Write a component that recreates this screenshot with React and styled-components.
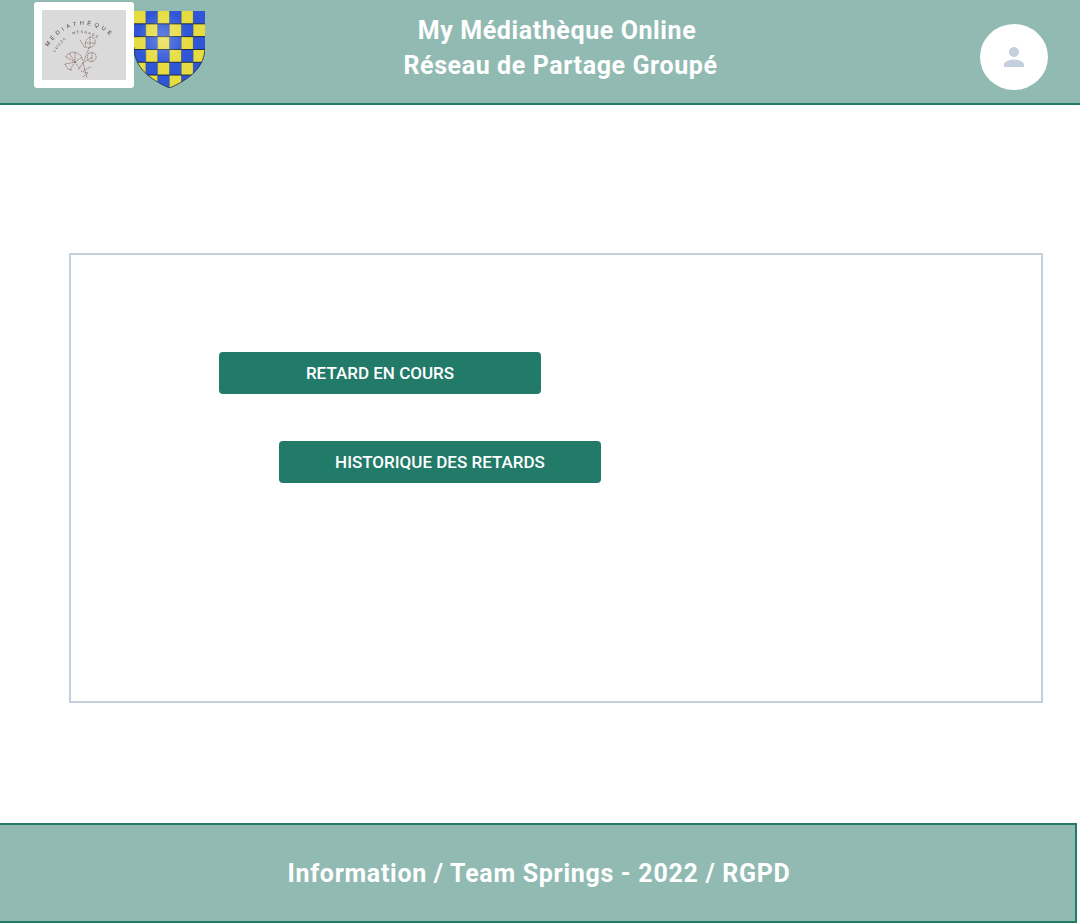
import React from "react";
import styled, { createGlobalStyle } from "styled-components";

const GlobalStyle = createGlobalStyle`
  html, body {
    margin: 0;
    padding: 0;
    background: #ffffff;
    font-family: Roboto, "Liberation Sans", sans-serif;
  }
`;

const Page = styled.div`
  width: 1080px;
  height: 924px;
  overflow: hidden;
`;

const Header = styled.header`
  box-sizing: border-box;
  height: 105px;
  display: flex;
  align-items: flex-start;
  padding: 2px 32px 0 34px;
  background: #91bbb2;
  border-bottom: 2px solid #227a69;
`;

const LogoFrame = styled.div`
  box-sizing: border-box;
  flex: none;
  width: 100px;
  height: 86px;
  padding: 8px;
  background: #ffffff;
  border-radius: 3px;
`;

const LogoImage = styled.svg`
  display: block;
  width: 84px;
  height: 70px;
  background: #dadada;
`;

const LogoInk = styled.g`
  filter: blur(0.4px);
`;

const Shield = styled.svg`
  display: block;
  flex: none;
  width: 71px;
  height: 77px;
  margin-top: 9px;
`;

const Title = styled.h1`
  flex: 1;
  margin: 11px 0 0;
  font-size: 25px;
  font-weight: 700;
  line-height: 35px;
  letter-spacing: 0.6px;
  color: #ffffff;
  text-align: center;
`;

const TitleLine = styled.div`
  padding-right: ${(p) => p.$shift || 0}px;
`;

const Avatar = styled.div`
  flex: none;
  width: 68px;
  height: 66px;
  margin: 22px 0 0 64px;
  display: flex;
  align-items: center;
  justify-content: center;
  border-radius: 50%;
  background: #ffffff;
`;

const Main = styled.main`
  padding: 148px 37px 120px 69px;
`;

const Panel = styled.section`
  box-sizing: border-box;
  height: 450px;
  padding-top: 97px;
  border: 2px solid #c5d0de;
`;

const ActionButton = styled.button`
  display: block;
  width: 322px;
  height: 42px;
  margin: 0 0 47px ${(p) => p.$indent}px;
  padding: 0;
  border: 0;
  border-radius: 4px;
  background: #227a69;
  color: #ffffff;
  font-family: inherit;
  font-size: 17px;
  font-weight: 500;
  text-transform: uppercase;
`;

const Footer = styled.footer`
  box-sizing: border-box;
  width: 1077px;
  height: 100px;
  padding-left: 3px;
  display: flex;
  align-items: center;
  justify-content: center;
  background: #91bbb2;
  border: 2px solid #227a69;
  border-left: 0;
  font-size: 25px;
  font-weight: 700;
  letter-spacing: 0.7px;
  color: #ffffff;
`;

const cols = [0, 1, 2, 3, 4, 5];
const rows = [0, 1, 2, 3, 4, 5];

function ShieldIcon() {
  return (
    <Shield viewBox="0 0 71 77" aria-hidden="true">
      <defs>
        <clipPath id="shield-shape">
          <path d="M0 0H71V36C71 56 56 68 35.5 77C15 68 0 56 0 36Z" />
        </clipPath>
        <radialGradient id="shield-glow" cx="0.4" cy="0.36" r="0.36">
          <stop offset="0" stopColor="#ffffff" stopOpacity="0.28" />
          <stop offset="1" stopColor="#ffffff" stopOpacity="0" />
        </radialGradient>
      </defs>
      <g clipPath="url(#shield-shape)">
        {rows.map((r) =>
          cols.map((c) => (
            <rect
              key={`${r}-${c}`}
              x={c * 11.83}
              y={r * 12.8}
              width="11.9"
              height="12.9"
              fill={(r + c) % 2 === 0 ? "#e6dc40" : "#2f56d6"}
            />
          ))
        )}
        {[1, 2, 3, 4, 5].map((r) => (
          <rect key={r} x="0" y={r * 12.8 - 0.4} width="71" height="0.9" fill="#14203c" />
        ))}
        {[1, 2, 3, 4, 5].map((c) => (
          <rect key={c} x={c * 11.83 - 0.3} y="0" width="0.7" height="77" fill="#3c4a5c" opacity="0.55" />
        ))}
        <rect x="0" y="0" width="71" height="77" fill="url(#shield-glow)" />
      </g>
      <path d="M0 36C0 56 15 68 35.5 77C56 68 71 56 71 36" fill="none" stroke="#1a2440" strokeWidth="0.8" />
    </Shield>
  );
}

function LogoDrawing() {
  return (
    <LogoImage viewBox="0 0 84 70" aria-hidden="true">
      <defs>
        <path id="arc-outer" d="M6 37C16 20 32 14 43 15C56 15 67 22 74 33" />
        <path id="arc-inner" d="M13 43C20 30 30 23 38 23C49 23 60 29 67 40" />
      </defs>
      <LogoInk>
        <text fontFamily="'Liberation Sans', sans-serif" fontSize="5.6" fill="#4a3b3b" letterSpacing="3.2">
          <textPath href="#arc-outer">MÉDIATHÈQUE</textPath>
        </text>
        <text fontFamily="'Liberation Sans', sans-serif" fontSize="3.6" fill="#5f4d4d" letterSpacing="1.3">
          <textPath href="#arc-inner">VOUZA · MESNAGE</textPath>
        </text>
        <g fill="none" stroke="#7c5a58" strokeWidth="0.7" strokeDasharray="1.4 0.7">
          <path d="M33 52L24 47M33 52L27 43M33 52L33 42M33 52L40 47M33 52L23 54M33 52L28 60M33 52L38 59" />
          <path d="M24 47C25 43 31 41 35 43C39 45 41 48 40 51M23 54C24 58 27 60 30 60" />
          <path d="M48 27C52 27 54 30 53 33C52 37 47 39 44 37C42 34 44 29 48 27ZM48 27L48 38M43 33L53 33" />
          <path d="M47 38L41 53L45 68M38 30L43 38M41 53L50 47M41 53L36 60M42 60L49 57" />
          <path d="M47 43C51 41 55 44 54 48C53 52 48 53 46 50C45 48 45 45 47 43ZM50 43L50 52" />
          <path d="M39 61L46 63L41 67" />
        </g>
      </LogoInk>
    </LogoImage>
  );
}

function PersonIcon() {
  return (
    <svg width="30" height="30" viewBox="0 0 24 24" fill="#c5d0de" aria-hidden="true">
      <path d="M12 12c2.21 0 4-1.79 4-4s-1.79-4-4-4-4 1.79-4 4 1.79 4 4 4zm0 2c-2.67 0-8 1.34-8 4v2h16v-2c0-2.66-5.33-4-8-4z" />
    </svg>
  );
}

export default function App() {
  return (
    <Page>
      <GlobalStyle />
      <Header>
        <LogoFrame>
          <LogoDrawing />
        </LogoFrame>
        <ShieldIcon />
        <Title>
          <TitleLine $shift={7}>My Médiathèque Online</TitleLine>
          <TitleLine>Réseau de Partage Groupé</TitleLine>
        </Title>
        <Avatar>
          <PersonIcon />
        </Avatar>
      </Header>
      <Main>
        <Panel>
          <ActionButton $indent={148}>Retard en cours</ActionButton>
          <ActionButton $indent={208}>Historique des retards</ActionButton>
        </Panel>
      </Main>
      <Footer>Information / Team Springs - 2022 / RGPD</Footer>
    </Page>
  );
}
